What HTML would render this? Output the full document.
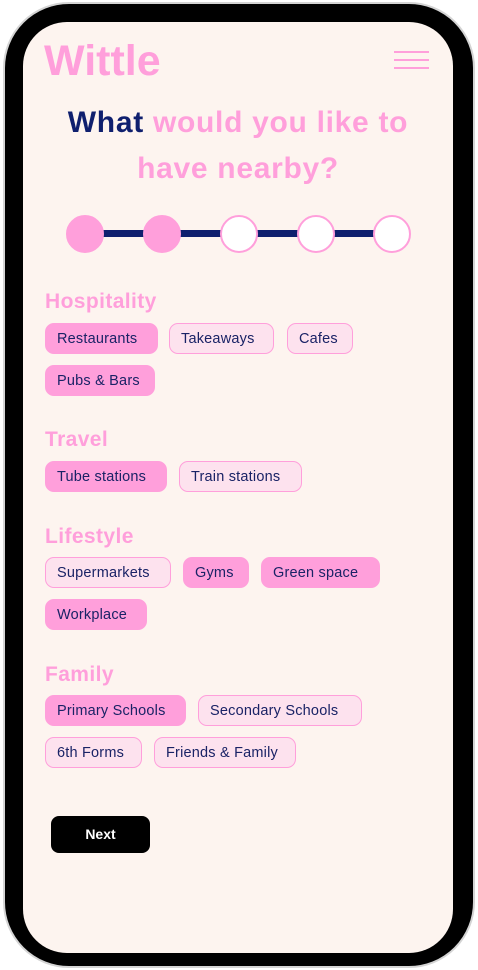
<!DOCTYPE html>
<html><head><meta charset="utf-8"><style>
*{margin:0;padding:0;box-sizing:border-box}
body{width:478px;height:970px;background:#fff;position:relative;overflow:hidden;font-family:"Liberation Sans",sans-serif}
.frame{position:absolute;left:3px;top:2px;width:472px;height:966px;border-radius:66px;background:#000;border:2px solid #d4d4d4}
.screen{position:absolute;left:23px;top:22px;width:430px;height:931px;border-radius:44px;background:#fdf4ef;overflow:hidden}
.a{position:absolute}
.logo{left:21px;top:15px;font-size:43px;font-weight:bold;color:#ff9fdb;letter-spacing:0px}
.hb{left:371px;width:35px;height:2px;background:#ff9fdb}
.title{left:0;width:430px;text-align:center;font-size:30px;font-weight:bold;color:#ff9fdb;line-height:46px;top:78px;letter-spacing:0.7px}
.title b{color:#0f1f6e}
.line{top:208px;left:62px;width:307px;height:7px;background:#0f1f6e}
.c{width:38px;height:38px;border-radius:50%;top:193px;background:#fff;border:2px solid #ff9fdb}
.c.f{background:#ff9fdb}
.h{left:22px;font-size:21px;font-weight:bold;color:#ff9fdb;letter-spacing:0.4px}
.chip{height:31px;border-radius:9px;font-size:14.5px;color:#1a2366;line-height:30px;padding-left:11px;white-space:nowrap;border:1.5px solid #ff9fdb;background:#fde2ee;letter-spacing:0.2px}
.chip.s{background:#ff9fdb}
.next{left:28px;top:794px;width:99px;height:37px;border-radius:8px;background:#000;color:#fff;font-weight:bold;font-size:14px;text-align:center;line-height:37px}
</style></head><body>
<div class="frame"></div>
<div class="screen">
<div class="a logo">Wittle</div>
<div class="a hb" style="top:29px"></div><div class="a hb" style="top:37px"></div><div class="a hb" style="top:45px"></div>
<div class="a title"><b>What</b> would you like to<br>have nearby?</div>
<div class="a line"></div>
<div class="a c f" style="left:43px"></div>
<div class="a c f" style="left:120px"></div>
<div class="a c" style="left:197px"></div>
<div class="a c" style="left:274px"></div>
<div class="a c" style="left:350px"></div>

<div class="a h" style="top:268px">Hospitality</div>
<div class="a chip s" style="left:22px;top:301px;width:113px">Restaurants</div>
<div class="a chip" style="left:146px;top:301px;width:105px">Takeaways</div>
<div class="a chip" style="left:264px;top:301px;width:66px">Cafes</div>
<div class="a chip s" style="left:22px;top:343px;width:110px">Pubs &amp; Bars</div>

<div class="a h" style="top:406px">Travel</div>
<div class="a chip s" style="left:22px;top:439px;width:122px">Tube stations</div>
<div class="a chip" style="left:156px;top:439px;width:123px">Train stations</div>

<div class="a h" style="top:503px">Lifestyle</div>
<div class="a chip" style="left:22px;top:535px;width:126px">Supermarkets</div>
<div class="a chip s" style="left:160px;top:535px;width:66px">Gyms</div>
<div class="a chip s" style="left:238px;top:535px;width:119px">Green space</div>
<div class="a chip s" style="left:22px;top:577px;width:102px">Workplace</div>

<div class="a h" style="top:641px">Family</div>
<div class="a chip s" style="left:22px;top:673px;width:141px">Primary Schools</div>
<div class="a chip" style="left:175px;top:673px;width:164px">Secondary Schools</div>
<div class="a chip" style="left:22px;top:715px;width:97px">6th Forms</div>
<div class="a chip" style="left:131px;top:715px;width:142px">Friends &amp; Family</div>

<div class="a next">Next</div>
</div>
</body></html>
